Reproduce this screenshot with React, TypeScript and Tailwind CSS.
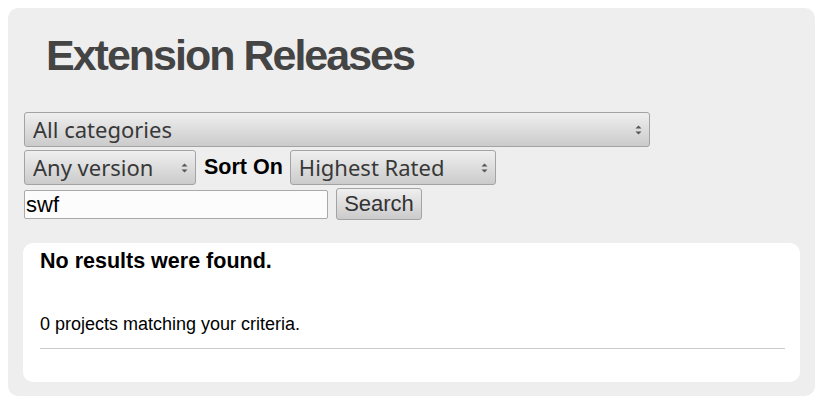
import React from 'react'

function Arrows() {
  return (
    <svg
      className="pointer-events-none absolute right-[8px] top-1/2 -translate-y-1/2"
      width="7"
      height="12"
      viewBox="0 0 7 12"
    >
      <path d="M3.5 1.5 L6.5 4.5 L0.5 4.5 Z" fill="#555" />
      <path d="M3.5 10.5 L6.5 7.5 L0.5 7.5 Z" fill="#555" />
    </svg>
  )
}

function Select({ width, value }: { width: string; value: string }) {
  return (
    <div className={`relative ${width} h-[35px]`}>
      <select
        defaultValue={value}
        className="h-full w-full appearance-none rounded-[3px] border border-[#a3a3a3] bg-linear-to-b from-[#efefef] to-[#cbcbcb] pl-[8px] pr-6 font-['Noto_Sans',sans-serif] text-[22px] leading-[33px] text-[#383838] outline-none"
      >
        <option>{value}</option>
      </select>
      <Arrows />
    </div>
  )
}

export default function App() {
  return (
    <div className="min-h-screen bg-white p-2 font-['Liberation_Sans',Arial,sans-serif]">
      <div className="h-[388px] w-[807px] rounded-[10px] bg-[#eeeeee] pl-[15px] pr-[15px] pt-[26px]">
        <h1 className="ml-[23px] text-[43px] font-bold leading-[43px] tracking-[-2px] text-[#444]">
          Extension Releases
        </h1>

        <div className="ml-px mt-[35px] flex flex-col gap-[3px]">
          <Select width="w-[626px]" value="All categories" />
          <div className="flex items-center">
            <Select width="w-[172px]" value="Any version" />
            <span className="ml-[8px] mr-[7px] text-[21.5px] font-bold text-black">Sort On</span>
            <Select width="w-[206px]" value="Highest Rated" />
          </div>
          <div className="flex items-center gap-[8px]">
            <input
              defaultValue="swf"
              className="h-[29px] w-[304px] rounded-[2px] border border-[#a9a9a9] bg-[#fcfcfc] px-[1px] text-[22px] text-black outline-none"
            />
            <button className="h-[32px] w-[86px] rounded-[3px] border border-[#a3a3a3] bg-linear-to-b from-[#efefef] to-[#cbcbcb] text-[22px] leading-[30px] text-[#333]">
              Search
            </button>
          </div>
        </div>

        <div className="mt-[23px] h-[139px] w-[777px] rounded-[10px] bg-white pl-[17px] pr-[15px] pt-[6px]">
          <h2 className="text-[21.5px] font-bold leading-[24px] text-black">No results were found.</h2>
          <p className="mt-[41px] text-[18px] leading-[20px] text-black">0 projects matching your criteria.</p>
          <hr className="mt-[14px] border-t border-[#cccccc]" />
        </div>
      </div>
    </div>
  )
}
